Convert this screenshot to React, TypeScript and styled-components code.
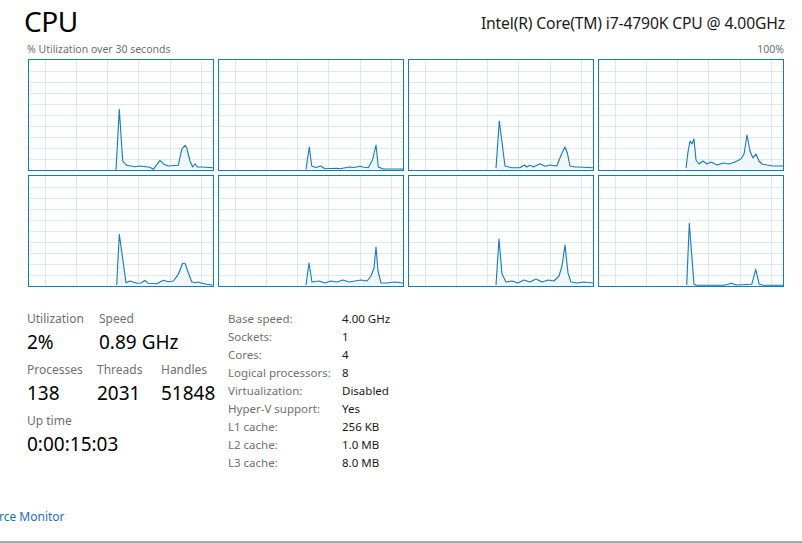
import React from "react";
import styled, { createGlobalStyle } from "styled-components";

const GlobalStyle = createGlobalStyle`
  html, body {
    margin: 0;
    padding: 0;
    background: #ffffff;
  }
  body {
    font-family: "Noto Sans", "Open Sans", sans-serif;
    color: #1a1a1a;
  }
`;

const LINE = "#117dbb";

type Pt = [number, number];

// points are in inner graph px: x 0..184, y 0..110 (0 = top)
const graphs: Pt[][] = [
  [[87, 110], [90.3, 49.3], [93.7, 101], [97.7, 105.3], [106, 106.7], [110.3, 106], [121, 107.3], [124.3, 109.3], [131, 100.3], [135, 104.3], [139.3, 106], [149.3, 105.3], [152.7, 89.3], [156, 85.3], [157.7, 87.7], [161, 101], [163.7, 107], [166, 103.7], [168.3, 107], [172.7, 107], [184, 107.7]],
  [[87, 109.5], [90.3, 87], [92.7, 106], [97, 107.5], [101.7, 106], [106, 108.7], [117.7, 108.3], [121, 108.7], [130.3, 107], [135, 107.5], [141, 106.3], [143.7, 107], [149.3, 107.7], [153.5, 100], [157, 85], [159.3, 107], [164.3, 109], [184, 109]],
  [[87, 108.3], [90.3, 61], [96, 106], [102.7, 107.7], [111, 107.7], [115.3, 105], [117.7, 107], [121, 105.3], [124.3, 107], [131, 103.7], [136, 106.3], [141, 105], [147.7, 106], [152.7, 93.7], [156, 87], [158.3, 92.7], [161, 106], [166, 107], [169.3, 107], [184, 107.7]],
  [[87, 108], [89, 92], [91, 81], [93, 84], [95, 79], [97, 100], [100, 104], [104, 101], [108, 104], [112, 102], [118, 105], [124, 103], [130, 104], [136, 102], [142, 99], [145, 94], [148, 75], [151, 91], [154, 98], [157, 94], [160, 101], [163, 104], [168, 105], [174, 106], [184, 106]],
  [[87.7, 109], [90.3, 58.3], [97, 106.7], [101, 105], [107.7, 107.3], [112, 107], [116, 104.3], [119.3, 107.3], [127.7, 107.7], [134.3, 104.3], [139.3, 105.7], [144.3, 105], [149.3, 98.3], [153.7, 87.3], [156, 87.3], [159.3, 96.7], [162.7, 105.7], [166, 106.7], [169.3, 106], [172.7, 107.3], [177.7, 108.3], [183.7, 109]],
  [[87, 109], [90, 87], [93, 106], [100, 105], [106, 107], [112, 105], [118, 106], [124, 104], [130, 106], [136, 105], [142, 104], [148, 105], [152, 100], [155, 92], [157, 71], [159, 95], [162, 107], [168, 107], [176, 106], [184, 107]],
  [[87, 109], [90, 63], [93, 98], [97, 106], [103, 105], [109, 107], [115, 104], [121, 106], [127, 103], [133, 106], [139, 104], [145, 105], [150, 100], [153, 90], [156, 69], [159, 97], [162, 106], [168, 107], [175, 106], [184, 107]],
  [[87.7, 109], [90.3, 47.3], [95, 108.3], [97.7, 109.3], [125, 109.3], [132.7, 107.3], [137, 109], [152.7, 108.3], [156.7, 93.3], [160.3, 108.3], [164.3, 109.3], [184, 109.3]],
];

const Page = styled.div`
  position: relative;
  width: 802px;
  height: 543px;
  overflow: hidden;
  display: flex;
  flex-direction: column;
`;

const Header = styled.div`
  display: flex;
  align-items: flex-end;
  justify-content: space-between;
  padding: 2px 17px 0 24px;
  height: 36px;
`;

const Title = styled.div`
  font-size: 28px;
  line-height: 34px;
  font-weight: 400;
  color: #000;
  letter-spacing: -0.4px;
`;

const Model = styled.div`
  font-size: 15.7px;
  line-height: 20px;
  color: #1a1a1a;
  padding-bottom: 5px;
  letter-spacing: -0.15px;
`;

const Caption = styled.div`
  display: flex;
  justify-content: space-between;
  padding: 4px 18px 0 27px;
  font-size: 10.5px;
  line-height: 14px;
  color: #707070;
`;

const GraphGrid = styled.div`
  display: grid;
  grid-template-columns: repeat(4, 186px);
  grid-auto-rows: 112px;
  gap: 4px;
  margin: 3px 0 0 28px;
`;

const GraphBox = styled.div`
  box-sizing: border-box;
  border: 1px solid ${LINE};
  background: #fff;
  svg {
    display: block;
  }
`;

const Stats = styled.div`
  display: flex;
  padding: 24px 0 0 27px;
`;

const LeftStats = styled.div`
  width: 201px;
  display: flex;
  flex-direction: column;
`;

const StatRow = styled.div`
  display: flex;
  margin-bottom: 5px;
`;

const Stat = styled.div<{ $w?: number }>`
  width: ${({ $w }) => ($w ? `${$w}px` : "auto")};
  flex-shrink: 0;
`;

const StatLabel = styled.div`
  font-size: 12px;
  line-height: 16px;
  color: #707070;
`;

const StatValue = styled.div`
  font-size: 19px;
  line-height: 30px;
  color: #000;
`;

const Specs = styled.div`
  display: grid;
  grid-template-columns: 114px auto;
  grid-auto-rows: 18px;
  font-size: 11.5px;
  line-height: 18px;
  margin-top: -1px;
`;

const SpecLabel = styled.div`
  color: #707070;
`;

const SpecValue = styled.div`
  color: #1a1a1a;
`;

const Footer = styled.div`
  margin-top: auto;
  display: flex;
  flex-direction: column;
`;

const MonitorLink = styled.a`
  font-size: 12px;
  line-height: 16px;
  color: #1e6fbf;
  text-decoration: none;
  margin: 0 0 16px -1px;
`;

const Taskbar = styled.div`
  height: 2px;
  background: #a8a8a8;
`;

const vLines = [0, 1, 2, 3, 4, 5].map((i) => 15.5 + i * 31.3);
const hLines = [1, 2, 3, 4, 5, 6, 7, 8, 9].map((i) => i * 11 + 0.5);

const Graph = ({ pts }: { pts: Pt[] }) => {
  const line = pts.map((p) => `${p[0]},${p[1]}`).join(" ");
  const area = `${pts[0][0]},110 ${line} ${pts[pts.length - 1][0]},110`;
  return (
    <GraphBox>
      <svg width="184" height="110" viewBox="0 0 184 110">
        {vLines.map((x) => (
          <line key={"v" + x} x1={Math.round(x) + 0.5} y1={0} x2={Math.round(x) + 0.5} y2={110} stroke="#d9eaf4" strokeWidth={1} />
        ))}
        {hLines.map((y) => (
          <line key={"h" + y} x1={0} y1={y} x2={184} y2={y} stroke="#d9eaf4" strokeWidth={1} />
        ))}
        <polygon points={area} fill="#f1f6fa" />
        <polyline points={line} fill="none" stroke={LINE} strokeWidth={1.1} strokeLinejoin="round" />
      </svg>
    </GraphBox>
  );
};

const specs: [string, string][] = [
  ["Base speed:", "4.00 GHz"],
  ["Sockets:", "1"],
  ["Cores:", "4"],
  ["Logical processors:", "8"],
  ["Virtualization:", "Disabled"],
  ["Hyper-V support:", "Yes"],
  ["L1 cache:", "256 KB"],
  ["L2 cache:", "1.0 MB"],
  ["L3 cache:", "8.0 MB"],
];

export default function App() {
  return (
    <>
      <GlobalStyle />
      <Page>
        <Header>
          <Title>CPU</Title>
          <Model>Intel(R) Core(TM) i7-4790K CPU @ 4.00GHz</Model>
        </Header>
        <Caption>
          <span>% Utilization over 30 seconds</span>
          <span>100%</span>
        </Caption>
        <GraphGrid>
          {graphs.map((g, i) => (
            <Graph key={i} pts={g} />
          ))}
        </GraphGrid>
        <Stats>
          <LeftStats>
            <StatRow>
              <Stat $w={72}>
                <StatLabel>Utilization</StatLabel>
                <StatValue>2%</StatValue>
              </Stat>
              <Stat>
                <StatLabel>Speed</StatLabel>
                <StatValue>0.89 GHz</StatValue>
              </Stat>
            </StatRow>
            <StatRow>
              <Stat $w={70}>
                <StatLabel>Processes</StatLabel>
                <StatValue>138</StatValue>
              </Stat>
              <Stat $w={64}>
                <StatLabel>Threads</StatLabel>
                <StatValue>2031</StatValue>
              </Stat>
              <Stat>
                <StatLabel>Handles</StatLabel>
                <StatValue>51848</StatValue>
              </Stat>
            </StatRow>
            <StatRow>
              <Stat>
                <StatLabel>Up time</StatLabel>
                <StatValue>0:00:15:03</StatValue>
              </Stat>
            </StatRow>
          </LeftStats>
          <Specs>
            {specs.map(([k, v]) => (
              <React.Fragment key={k}>
                <SpecLabel>{k}</SpecLabel>
                <SpecValue>{v}</SpecValue>
              </React.Fragment>
            ))}
          </Specs>
        </Stats>
        <Footer>
          <MonitorLink href="#">rce Monitor</MonitorLink>
          <Taskbar />
        </Footer>
      </Page>
    </>
  );
}
